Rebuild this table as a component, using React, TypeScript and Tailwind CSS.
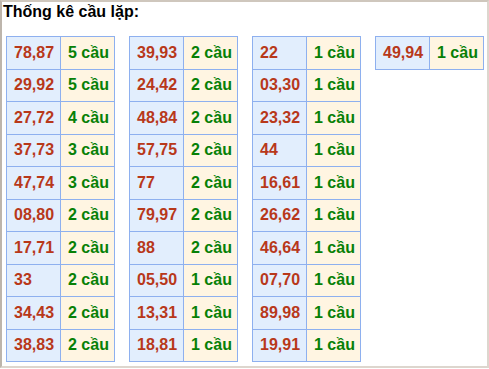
import React from 'react';

type Row = [string, number];

const columns: Row[][] = [
  [
    ['78,87', 5], ['29,92', 5], ['27,72', 4], ['37,73', 3], ['47,74', 3],
    ['08,80', 2], ['17,71', 2], ['33', 2], ['34,43', 2], ['38,83', 2],
  ],
  [
    ['39,93', 2], ['24,42', 2], ['48,84', 2], ['57,75', 2], ['77', 2],
    ['79,97', 2], ['88', 2], ['05,50', 1], ['13,31', 1], ['18,81', 1],
  ],
  [
    ['22', 1], ['03,30', 1], ['23,32', 1], ['44', 1], ['16,61', 1],
    ['26,62', 1], ['46,64', 1], ['07,70', 1], ['89,98', 1], ['19,91', 1],
  ],
  [['49,94', 1]],
];

const LoopTable: React.FC<{ rows: Row[] }> = ({ rows }) => (
  <table className="w-[109px] table-fixed border-collapse border border-[#8eb0ef]">
    <tbody>
      {rows.map(([pair, count]) => (
        <tr key={pair} className="h-[32.5px]">
          <td className="border border-[#8eb0ef] bg-[#e2eefd] py-0 pl-[7px] pr-0 text-left text-[16px] font-bold text-[#b8381a]">
            {pair}
          </td>
          <td className="border border-[#8eb0ef] bg-[#fff5e2] py-0 pl-[7px] pr-0 text-left text-[16px] font-bold text-[#078007]">
            {count} cầu
          </td>
        </tr>
      ))}
    </tbody>
  </table>
);

export default function App() {
  return (
    <div
      className="h-[368px] w-[489px] border-2 border-[#ddd6ce] border-l-[#bdb5ac] border-t-[#cfc7bd] bg-white"
      style={{ fontFamily: '"Liberation Sans", Arial, sans-serif' }}
    >
      <div className="pl-px pt-px text-[16px] font-bold leading-[18px] text-black">Thống kê cầu lặp:</div>
      <div className="mt-[15px] flex items-start gap-[14px] pl-[4px]">
        {columns.map((rows, i) => (
          <LoopTable key={i} rows={rows} />
        ))}
      </div>
    </div>
  );
}
